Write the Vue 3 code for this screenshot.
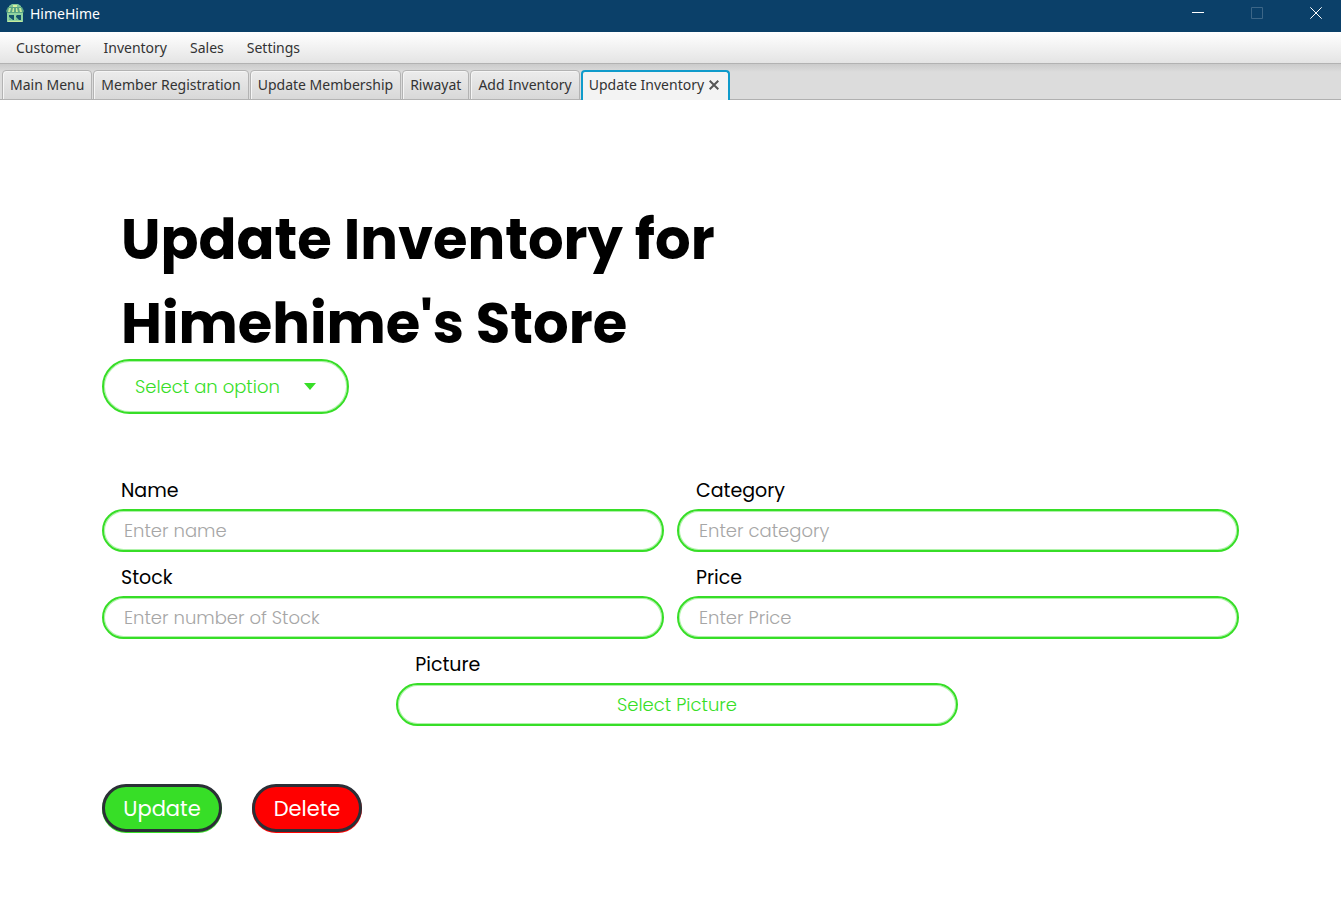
<script setup>
import { ref } from 'vue'

const menus = ['Customer', 'Inventory', 'Sales', 'Settings']
const tabs = ['Main Menu', 'Member Registration', 'Update Membership', 'Riwayat', 'Add Inventory', 'Update Inventory']
const active = ref('Update Inventory')

const fields = [
  { id: 'name', label: 'Name', placeholder: 'Enter name' },
  { id: 'category', label: 'Category', placeholder: 'Enter category' },
  { id: 'stock', label: 'Stock', placeholder: 'Enter number of Stock' },
  { id: 'price', label: 'Price', placeholder: 'Enter Price' },
]
</script>

<template>
  <div class="window">
    <header class="titlebar">
      <svg class="logo" viewBox="0 0 18 18" aria-hidden="true">
        <path d="M3 2l3-2h6l3 2v2H3z" fill="#7fc79a" />
        <path d="M7 1h4v2H7z" fill="#d8f0a0" />
        <path d="M2 3h14l2 4-1 2H1L0 7z" fill="#5aa585" />
        <path d="M3 4h2L4 8H2zM7 4h1v4H6zM10 4h1l1 4h-2zM13 4h2l1 4h-2z" fill="#c6ea9c" />
        <path d="M1 9h16v9H1z" fill="#8fd3a0" />
        <path d="M3 11h5v5H7l-4-3zM10 12l1-1h4v5h-2l-3-3z" fill="#14536b" />
        <path d="M3 14l3 2H3zM10 14l2 2h-2z" fill="#68b58c" />
        <path d="M2 17h14v1H2z" fill="#c6ea9c" />
      </svg>
      <span class="app-name">HimeHime</span>
      <div class="controls">
        <button type="button" aria-label="Minimize">
          <svg viewBox="0 0 12 12"><path d="M0 5.5h12" /></svg>
        </button>
        <button type="button" aria-label="Maximize" disabled>
          <svg viewBox="0 0 12 12"><path d="M.5.5h11v11H.5z" /></svg>
        </button>
        <button type="button" aria-label="Close">
          <svg viewBox="0 0 12 12"><path d="M.3.3l11.4 11.4M11.7.3L.3 11.7" /></svg>
        </button>
      </div>
    </header>

    <nav class="menubar">
      <button v-for="m in menus" :key="m" type="button">{{ m }}</button>
    </nav>

    <div class="tabs" role="tablist">
      <button
        v-for="t in tabs"
        :key="t"
        type="button"
        role="tab"
        class="tab"
        :class="{ active: t === active }"
        :aria-selected="t === active"
        @click="active = t"
      >
        {{ t }}
        <svg v-if="t === active" class="tab-close" viewBox="0 0 10 10" aria-hidden="true">
          <path d="M.7.7l8.6 8.6M9.3.7L.7 9.3" />
        </svg>
      </button>
    </div>

    <main class="page">
      <h1>Update Inventory for Himehime's Store</h1>

      <div class="picker">
        <select aria-label="Inventory item">
          <option>Select an option</option>
        </select>
        <svg class="arrow" viewBox="0 0 12 7" aria-hidden="true"><path d="M0 0h12L6 7z" /></svg>
      </div>

      <form class="form" @submit.prevent>
        <div class="fields">
          <div v-for="f in fields" :key="f.id" class="field">
            <label :for="f.id">{{ f.label }}</label>
            <input :id="f.id" type="text" :placeholder="f.placeholder" />
          </div>
          <div class="field picture">
            <label for="picture">Picture</label>
            <button id="picture" type="button">Select Picture</button>
          </div>
        </div>

        <div class="actions">
          <button type="submit" class="update">Update</button>
          <button type="button" class="delete">Delete</button>
        </div>
      </form>
    </main>
  </div>
</template>

<style>
body {
  margin: 0;
  background: #fff;
}
</style>

<style scoped>
* {
  box-sizing: border-box;
}

.window {
  font-family: 'Noto Sans', 'Open Sans', sans-serif;
  font-size: 14px;
  color: #333;
}

button,
input,
select {
  font: inherit;
  color: inherit;
  margin: 0;
}

.titlebar {
  display: flex;
  align-items: flex-start;
  height: 32px;
  padding: 4px 0 0 6px;
  background: #0b4069;
  color: #fff;
}

.logo {
  width: 18px;
  height: 18px;
  flex: none;
}

.app-name {
  margin-left: 6px;
  line-height: 20px;
}

.controls {
  display: flex;
  gap: 35px;
  margin-left: auto;
  padding-right: 13px;
}

.controls button {
  width: 24px;
  height: 18px;
  padding: 0 6px;
  border: 0;
  background: none;
  display: flex;
  align-items: center;
}

.controls svg {
  width: 12px;
  height: 12px;
  fill: none;
  stroke: #fff;
}

.controls button:disabled svg {
  stroke: #3c6687;
}

.menubar {
  display: flex;
  gap: 1px;
  height: 32px;
  padding-left: 5px;
  background: linear-gradient(#fff, #e4e4e4);
  border-bottom: 1px solid #b2b2b2;
}

.menubar button {
  padding: 0 11px;
  border: 0;
  background: none;
}

.tabs {
  display: flex;
  align-items: flex-end;
  gap: 1px;
  height: 36px;
  padding-left: 2px;
  background: linear-gradient(#cbcbcb, #dcdcdc 8px);
  box-shadow: inset 0 -1px #b0b0b0;
}

.tab {
  display: flex;
  align-items: center;
  gap: 5px;
  height: 30px;
  padding: 0 7px 2px;
  border: 1px solid #b3b3b3;
  border-radius: 4px 4px 0 0;
  background: linear-gradient(#ececec, #d8d8d8);
  box-shadow: inset 1px 1px #f5f5f5;
  white-space: nowrap;
}

.tab.active {
  padding: 0 9px 3px 6px;
  border: 2px solid #0f9bcb;
  border-bottom: 0;
  background: #f3f3f3;
  box-shadow: none;
}

.tab-close {
  width: 10px;
  height: 10px;
  fill: none;
  stroke: #555;
  stroke-width: 2;
}

.page {
  padding: 98px 102px 80px;
  font-family: Poppins, Inter, sans-serif;
  font-size: 18px;
  color: #000;
}

h1 {
  max-width: 680px;
  margin: 0 0 -7px;
  padding-left: 19px;
  font-size: 56px;
  line-height: 84px;
  font-weight: 700;
}

.picker {
  position: relative;
  width: 247px;
}

.picker select {
  appearance: none;
  width: 100%;
  height: 55px;
  padding: 0 60px 0 31px;
  border: 2px solid #37de27;
  border-radius: 28px;
  box-shadow: inset 0 0 0 1px #37de2766;
  background: #fff;
  color: #37de27;
  font-weight: 300;
  outline: 0;
}

.arrow {
  position: absolute;
  right: 33px;
  top: 24px;
  width: 12px;
  height: 7px;
  fill: #37de27;
  pointer-events: none;
}

.form {
  margin-top: 63px;
}

.fields {
  display: grid;
  grid-template-columns: 1fr 1fr;
  gap: 12px 13px;
}

.field {
  display: flex;
  flex-direction: column;
  gap: 4px;
}

.field label {
  padding-left: 19px;
  font-size: 19px;
  line-height: 28px;
}

.field input,
.field button {
  width: 100%;
  height: 43px;
  padding: 0 20px;
  border: 2px solid #37de27;
  border-radius: 22px;
  box-shadow: inset 0 0 0 1px #37de2766;
  background: #fff;
  font-weight: 300;
  outline: 0;
}

.field input::placeholder {
  color: #a6a6a6;
  opacity: 1;
}

.field button {
  color: #37de27;
}

.picture {
  grid-column: 1 / -1;
  justify-self: center;
  width: calc(50% - 7px);
  margin-left: 13px;
}

.actions {
  display: flex;
  gap: 30px;
  margin-top: 58px;
  font-size: 21px;
  color: #fff;
}

.actions button {
  height: 48px;
  padding: 0 18px;
  border: 3px solid #2b2f36;
  border-radius: 24px;
}

.actions .update {
  min-width: 120px;
  background: #37de27;
  box-shadow: 0 1px #37de27;
}

.actions .delete {
  min-width: 110px;
  background: #f00;
  box-shadow: 0 1px #f00;
}
</style>
